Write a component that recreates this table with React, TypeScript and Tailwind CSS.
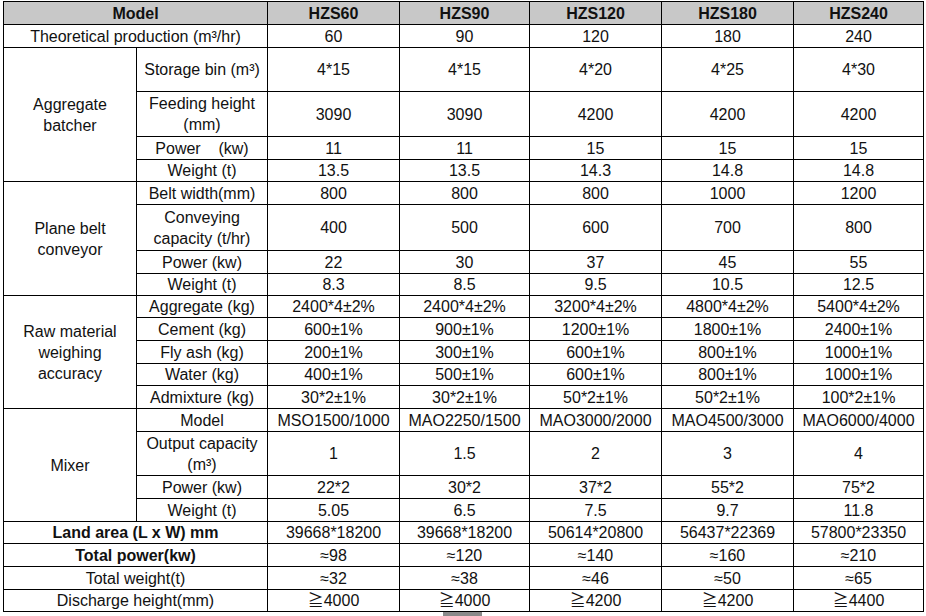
import React from "react";

type Row = { label: React.ReactNode; values: string[]; bold?: boolean; span?: boolean };

const font = { fontFamily: '"Liberation Sans", Arial, "Noto Sans CJK SC", sans-serif' };

function Cell({
  children,
  className = "",
}: {
  children?: React.ReactNode;
  className?: string;
}) {
  return (
    <div
      className={
        "flex items-center justify-center text-center bg-white text-[16px] leading-[21px] text-[#111] whitespace-pre " +
        className
      }
    >
      {children}
    </div>
  );
}

const groups: { name: React.ReactNode; span: string; rows: Row[] }[] = [
  {
    name: (
      <>
        Aggregate
        <br />
        batcher
      </>
    ),
    span: "row-span-4",
    rows: [
      { label: "Storage bin (m³)", values: ["4*15", "4*15", "4*20", "4*25", "4*30"] },
      {
        label: (
          <>
            Feeding height
            <br />
            (mm)
          </>
        ),
        values: ["3090", "3090", "4200", "4200", "4200"],
      },
      { label: "Power    (kw)", values: ["11", "11", "15", "15", "15"] },
      { label: "Weight (t)", values: ["13.5", "13.5", "14.3", "14.8", "14.8"] },
    ],
  },
  {
    name: (
      <>
        Plane belt
        <br />
        conveyor
      </>
    ),
    span: "row-span-4",
    rows: [
      { label: "Belt width(mm)", values: ["800", "800", "800", "1000", "1200"] },
      {
        label: (
          <>
            Conveying
            <br />
            capacity (t/hr)
          </>
        ),
        values: ["400", "500", "600", "700", "800"],
      },
      { label: "Power (kw)", values: ["22", "30", "37", "45", "55"] },
      { label: "Weight (t)", values: ["8.3", "8.5", "9.5", "10.5", "12.5"] },
    ],
  },
  {
    name: (
      <>
        Raw material
        <br />
        weighing
        <br />
        accuracy
      </>
    ),
    span: "row-span-5",
    rows: [
      {
        label: "Aggregate (kg)",
        values: ["2400*4±2%", "2400*4±2%", "3200*4±2%", "4800*4±2%", "5400*4±2%"],
      },
      { label: "Cement (kg)", values: ["600±1%", "900±1%", "1200±1%", "1800±1%", "2400±1%"] },
      { label: "Fly ash (kg)", values: ["200±1%", "300±1%", "600±1%", "800±1%", "1000±1%"] },
      { label: "Water (kg)", values: ["400±1%", "500±1%", "600±1%", "800±1%", "1000±1%"] },
      {
        label: "Admixture (kg)",
        values: ["30*2±1%", "30*2±1%", "50*2±1%", "50*2±1%", "100*2±1%"],
      },
    ],
  },
  {
    name: "Mixer",
    span: "row-span-4",
    rows: [
      {
        label: "Model",
        values: ["MSO1500/1000", "MAO2250/1500", "MAO3000/2000", "MAO4500/3000", "MAO6000/4000"],
      },
      {
        label: (
          <>
            Output capacity
            <br />
            (m³)
          </>
        ),
        values: ["1", "1.5", "2", "3", "4"],
      },
      { label: "Power (kw)", values: ["22*2", "30*2", "37*2", "55*2", "75*2"] },
      { label: "Weight (t)", values: ["5.05", "6.5", "7.5", "9.7", "11.8"] },
    ],
  },
];

const tail: Row[] = [
  {
    label: "Land area (L x W) mm",
    bold: true,
    values: ["39668*18200", "39668*18200", "50614*20800", "56437*22369", "57800*23350"],
  },
  { label: "Total power(kw)", bold: true, values: ["≈98", "≈120", "≈140", "≈160", "≈210"] },
  { label: "Total weight(t)", values: ["≈32", "≈38", "≈46", "≈50", "≈65"] },
  { label: "Discharge height(mm)", values: ["≧4000", "≧4000", "≧4200", "≧4200", "≧4400"] },
];

export default function App() {
  const models = ["HZS60", "HZS90", "HZS120", "HZS180", "HZS240"];
  return (
    <div className="w-[926px] h-[616px] bg-white overflow-hidden pt-[1px]" style={font}>
      <div className="ml-[3px] w-fit grid gap-px bg-black border border-black grid-cols-[132px_130px_131px_129px_131px_131px_129px] grid-rows-[22px_22px_43px_44px_22px_21px_22px_45px_22px_21px_21px_22px_22px_21px_22px_22px_43px_22px_22px_21px_22px_22px_21px]">
        <Cell className="col-span-2 !bg-[#c8c8c8] font-bold">Model</Cell>
        {models.map((m) => (
          <Cell key={m} className="!bg-[#c8c8c8] font-bold">
            {m}
          </Cell>
        ))}
        <Cell className="col-span-2">Theoretical production (m³/hr)</Cell>
        {["60", "90", "120", "180", "240"].map((v, i) => (
          <Cell key={i}>{v}</Cell>
        ))}
        {groups.map((g, gi) => (
          <React.Fragment key={gi}>
            <Cell className={g.span}>{g.name}</Cell>
            {g.rows.map((r, ri) => (
              <React.Fragment key={ri}>
                <Cell>{r.label}</Cell>
                {r.values.map((v, vi) => (
                  <Cell key={vi}>{v}</Cell>
                ))}
              </React.Fragment>
            ))}
          </React.Fragment>
        ))}
        {tail.map((r, ri) => (
          <React.Fragment key={ri}>
            <Cell className={"col-span-2" + (r.bold ? " font-bold" : "")}>{r.label}</Cell>
            {r.values.map((v, vi) => (
              <Cell key={vi}>{v}</Cell>
            ))}
          </React.Fragment>
        ))}
      </div>
      <div className="ml-[443px] w-[39px] h-[4px] bg-[#8a8a8a]" />
    </div>
  );
}
